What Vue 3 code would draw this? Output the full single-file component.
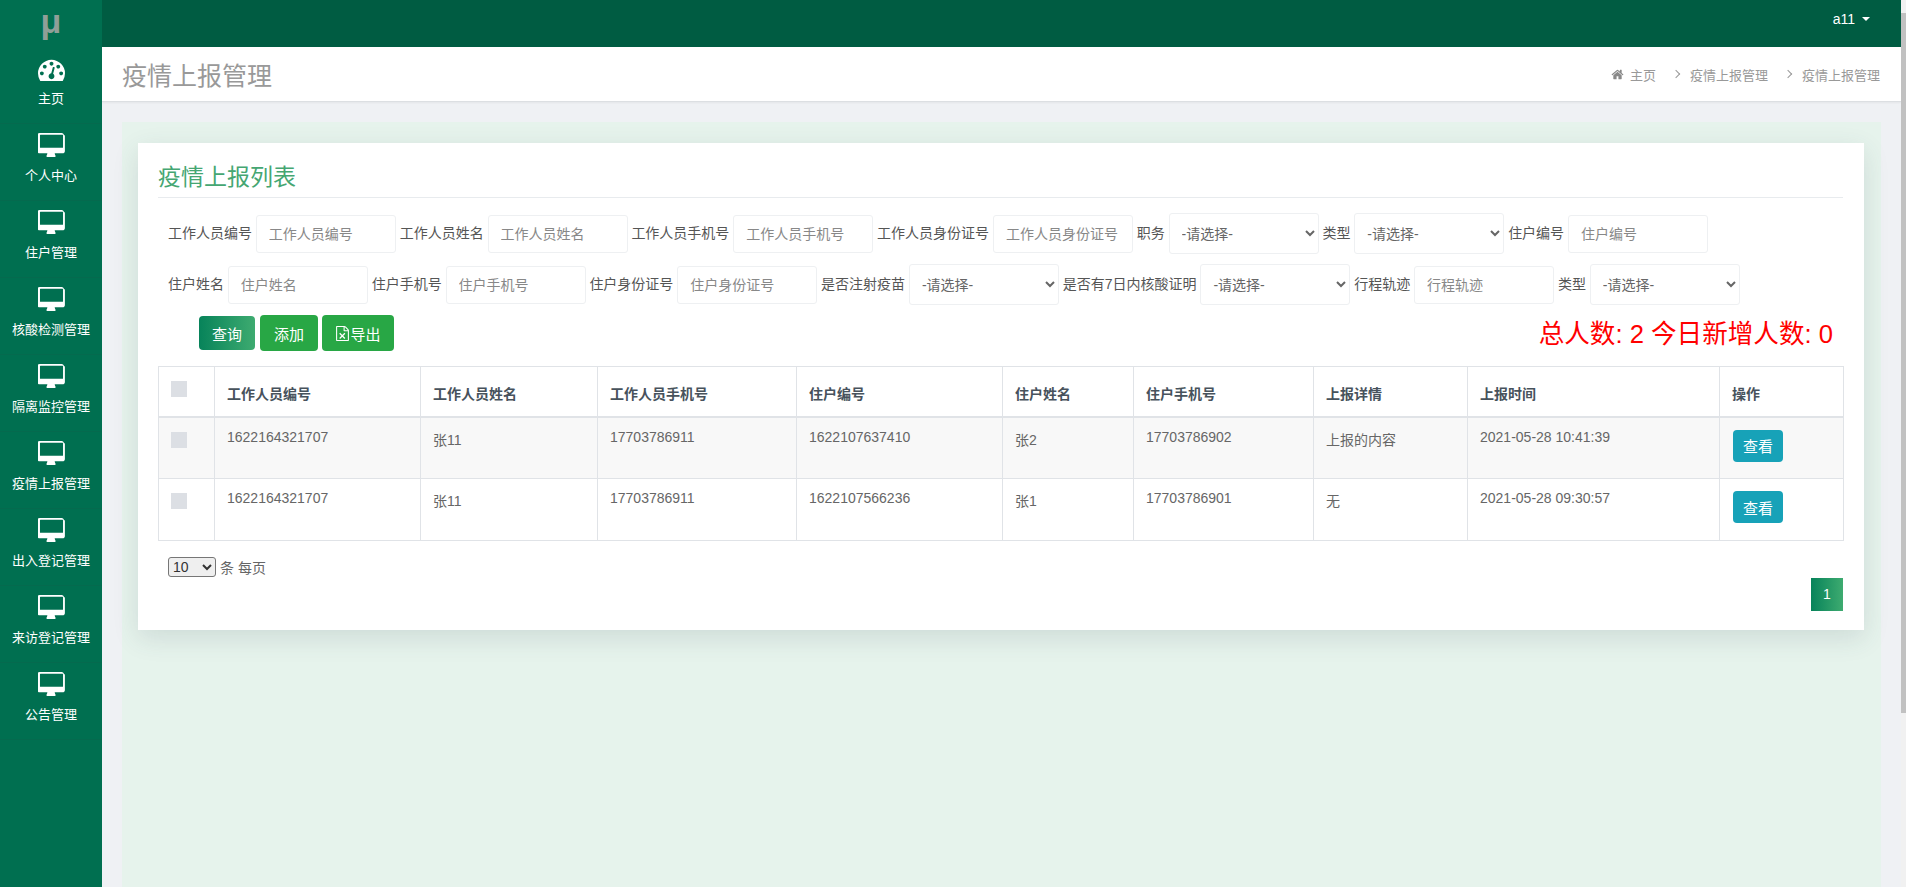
<template>
  <div class="layout">
    <aside class="sidebar">
      <div class="logo">μ</div>
      <a v-for="(item, i) in menu" :key="item" class="menu-item">
        <svg v-if="i === 0" class="icon-gauge" viewBox="0 0 1792 1792">
          <path fill="#fff" fill-rule="evenodd" d="M384 1152q0-53-37.5-90.5t-90.5-37.5-90.5 37.5-37.5 90.5 37.5 90.5 90.5 37.5 90.5-37.5 37.5-90.5zm192-448q0-53-37.5-90.5t-90.5-37.5-90.5 37.5-37.5 90.5 37.5 90.5 90.5 37.5 90.5-37.5 37.5-90.5zm428 481l101-382q6-26-7.5-48.5t-38.5-29.5-48 6.5-30 39.5l-101 382q-60 5-107 43.5t-63 98.5q-20 77 20 146t117 89 146-20 89-117q16-60-6-117t-72-91zm660-33q0-53-37.5-90.5t-90.5-37.5-90.5 37.5-37.5 90.5 37.5 90.5 90.5 37.5 90.5-37.5 37.5-90.5zm-640-640q0-53-37.5-90.5t-90.5-37.5-90.5 37.5-37.5 90.5 37.5 90.5 90.5 37.5 90.5-37.5 37.5-90.5zm448 192q0-53-37.5-90.5t-90.5-37.5-90.5 37.5-37.5 90.5 37.5 90.5 90.5 37.5 90.5-37.5 37.5-90.5zm320 448q0 261-141 483-19 29-54 29h-1402q-35 0-54-29-141-221-141-483 0-182 71-348t191-286 286-191 348-71 348 71 286 191 191 286 71 348z" />
        </svg>
        <svg v-else class="icon-desktop" viewBox="0 0 1856 1664">
          <path fill="#fff" fill-rule="evenodd" d="M1728 992v-832q0-13-9.5-22.5t-22.5-9.5h-1536q-13 0-22.5 9.5t-9.5 22.5v832q0 13 9.5 22.5t22.5 9.5h1536q13 0 22.5-9.5t9.5-22.5zm128-832v1088q0 66-47 113t-113 47h-544q0 37 16 77.5t32 71 16 43.5q0 26-19 45t-45 19h-512q-26 0-45-19t-19-45q0-14 16-43.5t32-71 16-77.5h-544q-66 0-113-47t-47-113v-1088q0-66 47-113t113-47h1536q66 0 113 47t47 113z" />
        </svg>
        <span>{{ item }}</span>
      </a>
    </aside>

    <div class="page">
      <header class="topbar">
        <span class="user">a11<i class="caret"></i></span>
      </header>

      <div class="title-bar">
        <h1>疫情上报管理</h1>
        <nav class="crumbs">
          <svg class="icon-home" viewBox="0 0 1792 1792">
            <path fill="#888" d="M1472 992v480q0 26-19 45t-45 19h-384v-384h-256v384h-384q-26 0-45-19t-19-45v-480q0-1 .5-3t.5-3l575-474 575 474q1 2 1 6zm223-69l-62 74q-8 9-21 11h-3q-13 0-21-7l-692-577-692 577q-12 8-24 7-13-2-21-11l-62-74q-8-10-7-23.5t11-22.5l719-599q32-26 76-26t76 26l244 204v-195q0-14 9-23t23-9h192q14 0 23 9t9 23v408l219 182q10 8 11 21.5t-7 23.5z" />
          </svg>
          <span>主页</span>
          <i class="chev"></i>
          <span>疫情上报管理</span>
          <i class="chev"></i>
          <span>疫情上报管理</span>
        </nav>
      </div>

      <main class="content">
        <div class="panel">
          <section class="card">
            <h2 class="card-title">疫情上报列表</h2>

            <div class="search">
              <div v-for="(row, r) in filters" :key="r" class="search-row">
                <template v-for="f in row" :key="f.label + r">
                  <label>{{ f.label }}</label>
                  <select v-if="f.select"><option>-请选择-</option></select>
                  <input v-else :placeholder="f.label" />
                </template>
              </div>
            </div>

            <div class="actions">
              <button class="btn btn-query">查询</button>
              <button class="btn btn-green">添加</button>
              <button class="btn btn-green btn-export">
                <svg class="icon-xls" viewBox="0 0 1792 1792">
                  <path fill="#fff" d="M1596 380q28 28 48 76t20 88v1152q0 40-28 68t-68 28h-1344q-40 0-68-28t-28-68v-1600q0-40 28-68t68-28h896q40 0 88 20t76 48zm-444-244v376h376q-10-29-22-41l-313-313q-12-12-41-22zm384 1528v-1024h-416q-40 0-68-28t-28-68v-416h-768v1536h1280z" />
                  <path stroke="#fff" stroke-width="150" d="M560 860l620 640M1180 860l-620 640" />
                </svg>导出
              </button>
              <div class="counts">总人数: 2 今日新增人数: 0</div>
            </div>

            <table class="grid">
              <colgroup>
                <col v-for="w in colWidths" :key="w" :style="{ width: w + 'px' }" />
              </colgroup>
              <thead>
                <tr>
                  <th class="check-cell"><span class="check"></span></th>
                  <th v-for="h in headers" :key="h">{{ h }}</th>
                </tr>
              </thead>
              <tbody>
                <tr v-for="row in rows" :key="row.time">
                  <td class="check-cell"><span class="check"></span></td>
                  <td>{{ row.workerNo }}</td>
                  <td>{{ row.workerName }}</td>
                  <td>{{ row.workerPhone }}</td>
                  <td>{{ row.userNo }}</td>
                  <td>{{ row.userName }}</td>
                  <td>{{ row.userPhone }}</td>
                  <td>{{ row.detail }}</td>
                  <td>{{ row.time }}</td>
                  <td><button class="btn-view">查看</button></td>
                </tr>
              </tbody>
            </table>

            <div class="page-size">
              <select><option>10</option></select>
              <span>条 每页</span>
            </div>
            <div class="pager"><span class="page-num">1</span></div>
          </section>
        </div>
      </main>
    </div>

    <div class="scrollbar"><div class="thumb"></div></div>
  </div>
</template>

<script setup>
const menu = ['主页', '个人中心', '住户管理', '核酸检测管理', '隔离监控管理', '疫情上报管理', '出入登记管理', '来访登记管理', '公告管理']

const filters = [
  [
    { label: '工作人员编号' },
    { label: '工作人员姓名' },
    { label: '工作人员手机号' },
    { label: '工作人员身份证号' },
    { label: '职务', select: true },
    { label: '类型', select: true },
    { label: '住户编号' }
  ],
  [
    { label: '住户姓名' },
    { label: '住户手机号' },
    { label: '住户身份证号' },
    { label: '是否注射疫苗', select: true },
    { label: '是否有7日内核酸证明', select: true },
    { label: '行程轨迹' },
    { label: '类型', select: true }
  ]
]

const headers = ['工作人员编号', '工作人员姓名', '工作人员手机号', '住户编号', '住户姓名', '住户手机号', '上报详情', '上报时间', '操作']
const colWidths = [56, 206, 177, 199, 206, 131, 180, 154, 252, 124]

const rows = [
  { workerNo: '1622164321707', workerName: '张11', workerPhone: '17703786911', userNo: '1622107637410', userName: '张2', userPhone: '17703786902', detail: '上报的内容', time: '2021-05-28 10:41:39' },
  { workerNo: '1622164321707', workerName: '张11', workerPhone: '17703786911', userNo: '1622107566236', userName: '张1', userPhone: '17703786901', detail: '无', time: '2021-05-28 09:30:57' }
]
</script>

<style>
html, body {
  margin: 0;
  height: 100%;
  overflow: hidden;
}
</style>

<style scoped>
.layout {
  display: flex;
  height: 100vh;
  font-family: "Liberation Sans", "Noto Sans CJK SC", sans-serif;
  font-size: 14px;
  color: #666;
}

.sidebar {
  width: 102px;
  flex: none;
  background: #006f50;
}

.logo {
  height: 47px;
  line-height: 43px;
  text-align: center;
  font-size: 34px;
  font-weight: bold;
  color: #8f9f98;
}

.menu-item {
  display: flex;
  flex-direction: column;
  align-items: center;
  height: 76px;
  border-bottom: 1px solid #056a4e;
  color: #fff;
  font-size: 13px;
}

.icon-gauge {
  width: 27px;
  height: 27px;
  margin-top: 9px;
  margin-bottom: 5px;
}

.icon-desktop {
  width: 27px;
  height: 24px;
  margin-top: 9px;
  margin-bottom: 8px;
}

.page {
  flex: 1;
  min-width: 0;
  overflow: hidden;
  background: #eff1f4;
}

.scrollbar {
  width: 5px;
  flex: none;
  box-sizing: border-box;
  padding-top: 13px;
  background: #f1f1f1;
}

.thumb {
  height: 700px;
  background: #c1c1c1;
}

.topbar {
  height: 47px;
  box-sizing: border-box;
  padding: 0 31px 9px 0;
  background: #005c42;
  display: flex;
  justify-content: flex-end;
  align-items: center;
}

.user {
  color: #fff;
  font-size: 14px;
  display: flex;
  align-items: center;
}

.caret {
  width: 0;
  height: 0;
  margin-left: 7px;
  border-left: 4px solid transparent;
  border-right: 4px solid transparent;
  border-top: 4px solid #fff;
}

.title-bar {
  height: 55px;
  box-sizing: border-box;
  background: #fff;
  border-bottom: 1px solid #dcdfe2;
  box-shadow: 0 1px 2px rgba(0, 0, 0, 0.05);
  display: flex;
  justify-content: space-between;
  align-items: center;
  padding: 0 21px 0 20px;
}

.title-bar h1 {
  margin: 0;
  font-size: 25px;
  font-weight: normal;
  color: #999;
}

.crumbs {
  display: flex;
  align-items: center;
  font-size: 13px;
  color: #999;
}

.icon-home {
  width: 13px;
  height: 13px;
  margin-right: 6px;
}

.chev {
  width: 5px;
  height: 5px;
  margin: 0 11px 0 17px;
  border-top: 1px solid #999;
  border-right: 1px solid #999;
  transform: rotate(45deg);
}

.content {
  padding: 20px 20px 0;
}

.panel {
  background: #e6f3ec;
  padding: 21px 17px 0 16px;
  min-height: 958px;
  box-sizing: border-box;
}

.card {
  background: #fff;
  padding: 0 21px 19px 20px;
  box-shadow: 0 8px 24px rgba(60, 80, 90, 0.14);
}

.card-title {
  margin: 0;
  height: 54px;
  line-height: 68px;
  box-sizing: content-box;
  border-bottom: 1px solid #e8ebee;
  font-size: 23px;
  font-weight: normal;
  color: #45a672;
}

.search {
  padding: 15px 0 0 10px;
}

.search-row {
  display: flex;
  align-items: center;
  gap: 3.85px;
  height: 41px;
  margin-bottom: 10px;
  color: #555;
  white-space: nowrap;
}

.search-row label {
  margin-top: -3px;
}

.search-row input,
.search-row select {
  box-sizing: border-box;
  font: inherit;
  color: #666;
  background: #fff;
  border: 1px solid #eef0f2;
  border-radius: 3px;
  outline: none;
}

.search-row input {
  width: 140px;
  height: 38px;
  padding: 0 12px;
}

.search-row input::placeholder {
  color: #888;
}

.search-row select {
  width: 150px;
  height: 41px;
  padding: 0 8px;
}

.actions {
  display: flex;
  align-items: center;
  gap: 4px;
  height: 36px;
  margin-top: 1px;
  padding-left: 41px;
  margin-bottom: 15px;
}

.btn {
  border: none;
  border-radius: 4px;
  color: #fff;
  font: inherit;
  font-size: 15px;
  padding: 0;
}

.btn-query {
  width: 56px;
  height: 34px;
  background: linear-gradient(90deg, #07835a, #3eab70);
  margin-right: 1px;
}

.btn-green {
  width: 58px;
  height: 36px;
  background: #28a745;
}

.btn-export {
  width: 72px;
  display: flex;
  align-items: center;
  justify-content: center;
}

.icon-xls {
  width: 15px;
  height: 15px;
  flex: none;
}

.counts {
  margin-left: auto;
  margin-right: 10px;
  margin-bottom: 4px;
  font-size: 25.6px;
  color: #f00;
}

.grid {
  width: 100%;
  table-layout: fixed;
  border-collapse: collapse;
  color: #666;
}

.grid th,
.grid td {
  box-sizing: border-box;
  border: 1px solid #e0e3e7;
  padding: 11px 12px 0 12px;
  text-align: left;
  vertical-align: top;
  overflow: hidden;
  white-space: nowrap;
}

.grid th {
  height: 50px;
  padding-top: 16px;
  font-weight: bold;
  color: #47525c;
  border-bottom-width: 2px;
}

.grid td {
  height: 62px;
}

.grid tbody tr:nth-child(odd) {
  background: #f8f8f8;
}

.grid .check-cell {
  padding-top: 14px;
}

.check {
  display: block;
  width: 16px;
  height: 16px;
  background: #dcdfe4;
}

.btn-view {
  display: block;
  width: 50px;
  height: 32px;
  margin: 1px 0 0 1px;
  padding: 0;
  border: none;
  border-radius: 4px;
  background: #17a2b8;
  color: #fff;
  font: inherit;
  font-size: 15px;
}

.page-size {
  display: flex;
  align-items: center;
  gap: 4px;
  height: 20px;
  margin-top: 16px;
  padding-left: 10px;
}

.page-size select {
  width: 48px;
  height: 20px;
  box-sizing: border-box;
  font: inherit;
  color: #333;
  border-radius: 3px;
}

.pager {
  display: flex;
  justify-content: flex-end;
  margin-top: 1px;
}

.page-num {
  width: 32px;
  height: 33px;
  line-height: 33px;
  text-align: center;
  font-size: 14px;
  color: #fff;
  background: linear-gradient(90deg, #07835a, #3eab70);
}
</style>
